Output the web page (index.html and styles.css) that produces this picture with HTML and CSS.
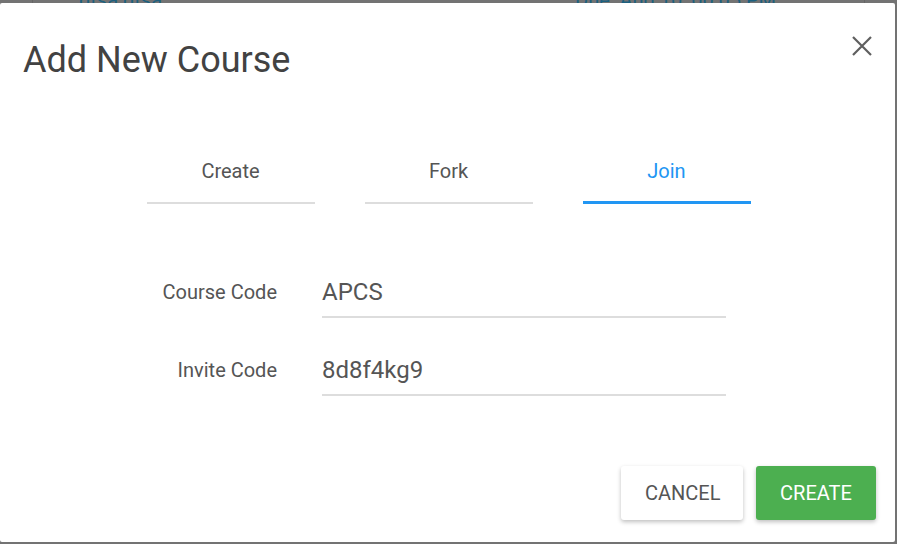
FILE: index.html
```html
<!DOCTYPE html>
<html>
<head>
<meta charset="utf-8">
<link rel="stylesheet" href="styles.css">
</head>
<body>
<div class="page">
  <div class="card">
    <div class="card-row">
      <span class="bg-link">dtsa dtsa</span>
      <span class="bg-link">Due: Aug 10, 00:05 PM</span>
    </div>
  </div>
</div>
<div class="modal">
  <div class="modal-header">
    <h1 class="modal-title">Add New Course</h1>
    <button class="close-btn" aria-label="Close">
      <svg width="20" height="20" viewBox="0 0 20 20"><path d="M1 1 L19 19 M19 1 L1 19" stroke="#5f5f5f" stroke-width="2.2" fill="none"/></svg>
    </button>
  </div>
  <div class="tabs">
    <div class="tab">Create</div>
    <div class="tab">Fork</div>
    <div class="tab active">Join</div>
  </div>
  <div class="form">
    <label class="label">Course Code</label>
    <div class="input">APCS</div>
    <label class="label">Invite Code</label>
    <div class="input">8d8f4kg9</div>
  </div>
  <div class="actions">
    <button class="btn btn-cancel">CANCEL</button>
    <button class="btn btn-create">CREATE</button>
  </div>
</div>
</body>
</html>
```
FILE: styles.css
```css
html, body {
  margin: 0;
  padding: 0;
}
body {
  background: #737373;
  font-family: Roboto, "Liberation Sans", sans-serif;
  width: 897px;
  height: 544px;
  overflow: hidden;
  position: relative;
}
.page {
  padding: 0 32px;
}
.card {
  border-left: 1px solid #666;
  border-right: 1px solid #666;
  height: 20px;
}
.card-row {
  display: flex;
  justify-content: space-between;
  padding: 0 88px 0 46px;
  margin-top: -12px;
  font-size: 20px;
  line-height: 24px;
}
.bg-link {
  color: #1c607f;
}
.modal {
  position: absolute;
  top: 3px;
  left: 0;
  width: 895px;
  height: 539px;
  background: #fff;
  border-radius: 2px;
  display: flex;
  flex-direction: column;
}
.modal-header {
  display: flex;
  justify-content: space-between;
  align-items: flex-start;
  padding: 33px 23px 0 23px;
}
.modal-title {
  margin: 4px 0 0 0;
  font-size: 36px;
  line-height: 40px;
  font-weight: 400;
  color: #424242;
}
.close-btn {
  border: 0;
  background: none;
  padding: 0;
  width: 20px;
  height: 20px;
  display: block;
}
.close-btn svg {
  display: block;
}
.tabs {
  display: flex;
  justify-content: center;
  gap: 50px;
  margin-top: 79px;
  padding-left: 2px;
}
.tab {
  width: 168px;
  text-align: center;
  font-size: 20px;
  line-height: 24px;
  color: #555;
  padding-bottom: 19px;
  border-bottom: 2px solid #ddd;
}
.tab.active {
  color: #2196f3;
  padding-bottom: 18px;
  border-bottom: 3px solid #2196f3;
}
.form {
  display: grid;
  grid-template-columns: 141px 404px;
  column-gap: 45px;
  row-gap: 37px;
  margin: 73px 0 0 136px;
}
.label {
  text-align: right;
  font-size: 20px;
  line-height: 30px;
  color: #555;
}
.input {
  font-size: 24px;
  line-height: 30px;
  color: #555;
  padding-bottom: 9px;
  border-bottom: 2px solid #ddd;
}
.actions {
  display: flex;
  justify-content: flex-end;
  gap: 13px;
  margin-top: 70px;
  padding-right: 19px;
}
.btn {
  height: 54px;
  padding: 0 24px;
  font-family: Roboto, "Liberation Sans", sans-serif;
  font-size: 20px;
  border: 0;
  border-radius: 3px;
  box-shadow: 0 2px 4px rgba(0,0,0,0.25);
}
.btn-cancel {
  width: 122px;
  background: #fff;
  color: #555;
}
.btn-create {
  width: 120px;
  background: #4caf50;
  color: #fff;
}
```
